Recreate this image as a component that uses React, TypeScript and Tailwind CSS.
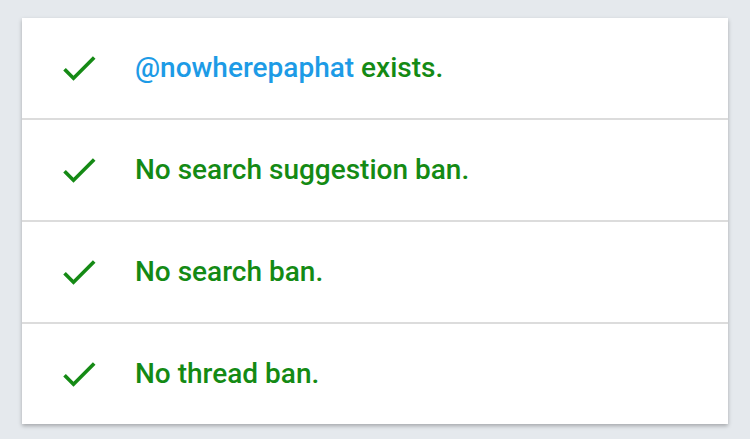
const rows = [
  { handle: '@nowherepaphat', text: ' exists.' },
  { text: 'No search suggestion ban.' },
  { text: 'No search ban.' },
  { text: 'No thread ban.' },
]

function Check() {
  return (
    <svg viewBox="0 0 24 24" className="w-[44px] h-[44px] shrink-0" fill="#158a15">
      <path d="M9 16.17L4.83 12l-1.42 1.41L9 19 21 7l-1.41-1.41z" />
    </svg>
  )
}

export default function App() {
  return (
    <div className="w-[750px] h-[439px] bg-[#e5e9ed] pt-[18px] pl-[22px] font-['Roboto',sans-serif]">
      <div className="w-[706px] bg-white shadow-[0_2px_4px_rgba(0,0,0,0.28)]">
        {rows.map((row, i) => (
          <div
            key={i}
            className={`flex items-center pl-[35px] gap-[34px] ${
              i < rows.length - 1 ? 'h-[102px] border-b-2 border-[#dcdcdc]' : 'h-[100px]'
            }`}
          >
            <Check />
            <p className="text-[28px] font-medium text-[#148a14] leading-none">
              {row.handle && <span className="text-[#1d9be6]">{row.handle}</span>}
              {row.text}
            </p>
          </div>
        ))}
      </div>
    </div>
  )
}
